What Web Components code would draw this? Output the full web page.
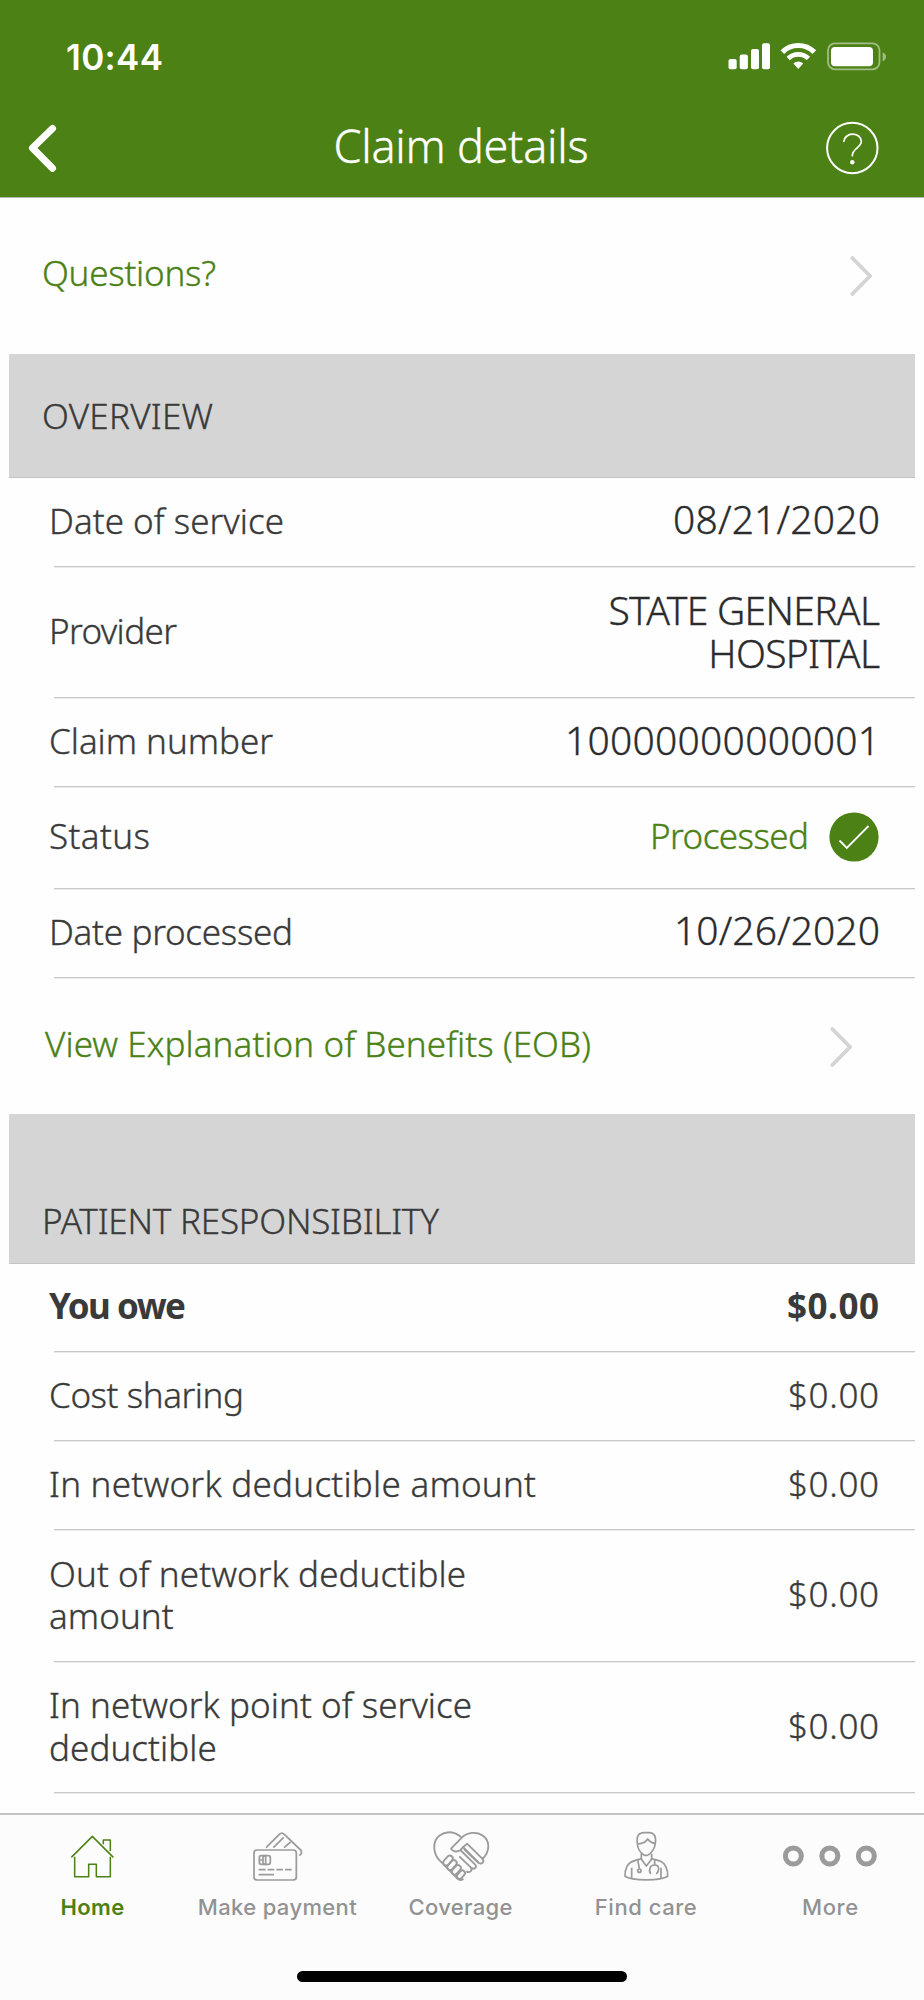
<!DOCTYPE html>
<html lang="en">
<head>
<meta charset="utf-8">
<title>Claim details</title>
<style>
  html, body {
    margin: 0;
    background: #fefefe;
  }

  body {
    width: 924px;
    height: 2000px;
    overflow: hidden;
    font-family: 'Noto Sans', 'Open Sans', sans-serif;
    font-weight: 300;
    font-size: 35px;
    color: #3a3a3a;
    -webkit-text-stroke: 0.35px;
  }
</style>
</head>
<body>
<claim-app>
  <status-bar slot="header"><fitted-text width="97">10:44</fitted-text></status-bar>
  <title-bar slot="header"><fitted-text width="255">Claim details</fitted-text></title-bar>

  <link-row style="--h:156px; --left:42px; --right:52px; --lift:6px"><fitted-text width="174">Questions?</fitted-text></link-row>

  <section-heading style="--h:124px"><fitted-text width="171">OVERVIEW</fitted-text></section-heading>
  <claim-row style="--h:89px">
    <fitted-text slot="label" width="235">Date of service</fitted-text>
    <fitted-text class="big date" width="207">08/21/2020</fitted-text>
  </claim-row>
  <claim-row style="--h:131px">
    <fitted-text slot="label" width="128">Provider</fitted-text>
    <fitted-text class="big" width="452" wrap style="width:290px">STATE GENERAL HOSPITAL</fitted-text>
  </claim-row>
  <claim-row style="--h:89px">
    <fitted-text slot="label" width="224">Claim number</fitted-text>
    <fitted-text class="big number" width="315">10000000000001</fitted-text>
  </claim-row>
  <claim-row style="--h:102px">
    <fitted-text slot="label" width="101">Status</fitted-text>
    <status-badge><fitted-text width="159">Processed</fitted-text></status-badge>
  </claim-row>
  <claim-row style="--h:89px">
    <fitted-text slot="label" width="244">Date processed</fitted-text>
    <fitted-text class="big date" width="206">10/26/2020</fitted-text>
  </claim-row>

  <link-row style="--h:136px; --left:45px; --right:72px; --lift:4px; --nudge:2px"><fitted-text width="546">View Explanation of Benefits (EOB)</fitted-text></link-row>

  <section-heading style="--h:150px; --drop:65px"><fitted-text width="397">PATIENT RESPONSIBILITY</fitted-text></section-heading>
  <claim-row class="strong" style="--h:88px">
    <fitted-text slot="label" width="137">You owe</fitted-text>
    <fitted-text width="92">$0.00</fitted-text>
  </claim-row>
  <claim-row style="--h:89px">
    <fitted-text slot="label" width="195">Cost sharing</fitted-text>
    <fitted-text width="91">$0.00</fitted-text>
  </claim-row>
  <claim-row style="--h:89px">
    <fitted-text slot="label" width="487">In network deductible amount</fitted-text>
    <fitted-text width="91">$0.00</fitted-text>
  </claim-row>
  <claim-row style="--h:132px">
    <fitted-text slot="label" width="551" wrap style="width:470px">Out of network deductible amount</fitted-text>
    <fitted-text width="91">$0.00</fitted-text>
  </claim-row>
  <claim-row style="--h:131px">
    <fitted-text slot="label" width="600" wrap style="width:470px">In network point of service deductible</fitted-text>
    <fitted-text width="91">$0.00</fitted-text>
  </claim-row>

  <tab-bar slot="footer">
    <tab-item icon="home" active><fitted-text width="64">Home</fitted-text></tab-item>
    <tab-item icon="payment"><fitted-text width="159">Make payment</fitted-text></tab-item>
    <tab-item icon="coverage"><fitted-text width="104">Coverage</fitted-text></tab-item>
    <tab-item icon="care"><fitted-text width="102">Find care</fitted-text></tab-item>
    <tab-item icon="more"><fitted-text width="56">More</fitted-text></tab-item>
  </tab-bar>
</claim-app>

<script>
  class BaseElement extends HTMLElement {
    constructor() {
      super();
      this.attachShadow({ mode: 'open' });
    }

    connectedCallback() {
      this.shadowRoot.innerHTML = `<style>${this.styles()}</style>${this.markup()}`;
    }

    styles() { return ''; }
    markup() { return '<slot></slot>'; }
  }

  /* Page shell: header, scrolling content, footer */
  class ClaimApp extends BaseElement {
    styles() {
      return `
        :host { display: flex; flex-direction: column; height: 2000px; }
        header { background: #4b8115; height: 197px; border-bottom: 1px solid #b3b8ae; flex: none; color: #fff; }
        main { flex: 1; min-height: 0; }
      `;
    }

    markup() {
      return `
        <header><slot name="header"></slot></header>
        <main><slot></slot></main>
        <slot name="footer"></slot>
      `;
    }
  }

  class StatusBar extends BaseElement {
    styles() {
      return `
        :host {
          display: flex; justify-content: space-between; align-items: center;
          box-sizing: border-box; height: 113px; padding: 0 37px 0 66px;
          font: 600 35px/42px Inter, sans-serif; -webkit-text-stroke: 0;
        }
        svg { display: block; }
      `;
    }

    markup() {
      return `
        <slot></slot>
        <svg width="160" height="32" viewBox="0 0 160 32" fill="#fff">
          <rect x="1.5" y="18" width="8.2" height="10.3" rx="2"/>
          <rect x="12.7" y="13.5" width="8.2" height="14.8" rx="2"/>
          <rect x="24" y="8" width="8" height="20.3" rx="2"/>
          <rect x="35" y="2.3" width="8" height="26" rx="2"/>
          <g fill="none" stroke="#fff" stroke-width="5.2">
            <path d="M55.3 11.2a22.5 22.5 0 0 1 32 0"/>
            <path d="M61.2 17.5a14.4 14.4 0 0 1 20.2 0" stroke-width="4.8"/>
          </g>
          <path d="M66.4 22.4a7.2 7.2 0 0 1 9.8 0l-4.9 5.6z"/>
          <rect x="101" y="2.3" width="51.5" height="26" rx="7" fill="none" stroke="#a2bd86" stroke-width="1.8"/>
          <rect x="104" y="6" width="42" height="19.3" rx="4"/>
          <path d="M155.7 11.2c4.4 2 4.4 7.2 0 9.2z" fill="#a2bd86"/>
        </svg>
      `;
    }
  }

  class TitleBar extends BaseElement {
    styles() {
      return `
        :host {
          display: grid; grid-template-columns: 64px 1fr 64px; align-items: center;
          height: 70px; padding: 0 40px 0 24px; font-size: 45px; line-height: 64px;
        }
        .title { text-align: center; padding: 0 0 4px 14px; }
        svg { display: block; }
        svg:last-child { justify-self: end; }
      `;
    }

    markup() {
      return `
        <svg width="40" height="56" viewBox="0 0 40 56" fill="none" stroke="#fff" stroke-width="7" stroke-linecap="round" stroke-linejoin="round">
          <path d="M28.5 8.5L8.5 28l20 20.2"/>
        </svg>
        <div class="title"><slot></slot></div>
        <svg width="64" height="56" viewBox="0 0 64 56" fill="none" stroke="#fff" stroke-width="2" stroke-linecap="round">
          <circle cx="32.3" cy="28" r="25.2"/>
          <path d="M23.9 21.4a8.5 7.5 0 0 1 8.7-7.2c5 0 8.7 3.1 8.7 7.3 0 6-9 6.8-9 14.2" stroke-width="1.7"/>
          <circle cx="32.3" cy="42.3" r="2.2" fill="#fff" stroke="none"/>
        </svg>
      `;
    }
  }

  class LinkRow extends BaseElement {
    styles() {
      return `
        :host {
          display: flex; justify-content: space-between; align-items: center;
          box-sizing: border-box; height: var(--h);
          padding: 0 var(--right) 0 var(--left); color: #4b8115; line-height: 38px;
        }
        div { padding-bottom: var(--lift); }
        svg { display: block; margin-top: var(--nudge, 0px); }
      `;
    }

    markup() {
      return `
        <div><slot></slot></div>
        <svg width="22" height="42" viewBox="0 0 22 42" fill="none" stroke="#d4d4d4" stroke-width="3.8" stroke-linecap="round">
          <path d="M2.3 3L20 21 2.3 39"/>
        </svg>
      `;
    }
  }

  class SectionHeading extends BaseElement {
    styles() {
      return `
        :host {
          display: flex; align-items: center; box-sizing: border-box;
          height: var(--h); margin: 0 9px; padding: var(--drop, 0px) 33px 0;
          background: #d5d5d5; border-bottom: 1px solid #c4c4c4; line-height: 38px;
        }
      `;
    }
  }

  class ClaimRow extends BaseElement {
    styles() {
      return `
        :host {
          display: flex; flex-direction: column; box-sizing: border-box;
          height: var(--h); padding: 0 9px 0 48px; line-height: 42px;
        }
        :host(.strong) { font-weight: 700; -webkit-text-stroke: 0; }
        .row { flex: 1; display: flex; justify-content: space-between; align-items: center; padding-right: 36px; }
        .label, .value { display: flex; flex-direction: column; padding-bottom: 3px; }
        .label { padding-left: 1px; }
        .value { align-items: flex-end; text-align: right; }
        .line { height: 1px; margin-left: 6px; background: #c8c8c8; box-shadow: 0 1px #ebebeb; }
        ::slotted(.big) { font-size: 39px; color: #2b2b2d; margin-right: -1px; }
        ::slotted(.date) { padding-bottom: 4px; }
        ::slotted(.number) { padding-bottom: 2px; }
        ::slotted([wrap]) { padding-top: 2px; }
      `;
    }

    markup() {
      return `
        <div class="row">
          <div class="label"><slot name="label"></slot></div>
          <div class="value"><slot></slot></div>
        </div>
        <div class="line"></div>
      `;
    }
  }

  class StatusBadge extends BaseElement {
    styles() {
      return `
        :host { display: flex; align-items: center; gap: 20px; color: #4b8115; }
        svg { display: block; margin: -3px 0 -4px 0; }
      `;
    }

    markup() {
      return `
        <slot></slot>
        <svg width="50" height="50" viewBox="0 0 50 50">
          <circle cx="25" cy="25" r="24.6" fill="#4b8115"/>
          <path d="M10.5 28.5l7.3 7.4L39.5 14" fill="none" stroke="#fff" stroke-width="1.8"/>
        </svg>
      `;
    }
  }

  class TabBar extends BaseElement {
    styles() {
      return `
        :host {
          display: flex; flex-direction: column; align-items: center; flex: none;
          box-sizing: border-box; height: 187px; background: #fcfcfc; border-top: 2px solid #c4c4c4;
        }
        nav { display: grid; grid-template-columns: repeat(5, 1fr); width: 100%; height: 156px; }
        .indicator { width: 330px; height: 11px; border-radius: 6px; background: #000; }
      `;
    }

    markup() {
      return `
        <nav><slot></slot></nav>
        <div class="indicator"></div>
      `;
    }
  }

  const ICONS = {
    home: {
      box: '13 84 288 168',
      art: `<g stroke-width="4.6">
        <path d="M95 172l63-63 63 63"/>
        <path d="M105 170v60h42v-37h23v37h42v-60"/>
        <path d="M191 133v-13h21v33"/>
      </g>`
    },
    payment: {
      box: '568 84 288 168',
      art: `<g stroke-width="5.2">
        <rect x="643" y="150" width="127" height="90" rx="9"/>
        <path d="M679 143l40-40c5-5 10-5 15 0l49 47c5 5 3 12-4 17"/>
        <path d="M701 143l31-31M733 143l20-17"/>
        <rect x="659" y="167" width="33" height="26" rx="6"/>
        <path d="M659 180h11M670 171c0-4 5-4 8-4v26c-3 0-8 0-8-4zM678 167v26"/>
        <path d="M657 209h21m6 0h20m6 0h20m6 0h20M657 224h46"/>
      </g>`
    },
    coverage: {
      box: '102 84 288 168',
      art: `<g stroke-width="5.6">
        <path d="M186 188C157 165 155 123 180 106c21-14 44-10 63 5"/>
        <path d="M306 178c25-22 24-55 4-70-19-15-48-11-64 4l-33 34c5 10 19 11 28 4l20-19 46 45c8 9-1 18-11 13l-44-42"/>
        <path d="M241 150l44 43c8 8-3 18-12 10l-35-34"/>
        <path d="M247 139l48 48M273 203c5 9-4 17-14 11"/>
        <rect x="187" y="173" width="34" height="17" rx="8.5" transform="rotate(-48 204 181.5)"/>
        <rect x="199" y="187" width="34" height="17" rx="8.5" transform="rotate(-48 216 195.5)"/>
        <rect x="213" y="201" width="32" height="17" rx="8.5" transform="rotate(-48 229 209.5)"/>
        <rect x="229" y="216" width="28" height="16" rx="8" transform="rotate(-48 243 224)"/>
        <path d="M186 188l46 48c6 6 13 6 18 0"/>
      </g>`
    },
    care: {
      box: '656 84 288 168',
      art: `<g stroke-width="5.2">
        <path d="M771 129c-3-22 5-31 21-31h14c15 0 22 10 19 31-1 16-12 31-22 36-5 2-8 2-12 0-10-6-20-20-20-36z"/>
        <path d="M773 132c11-1 23-5 29-15 5 7 12 12 22 14"/>
        <path d="M783 161v15c-15 5-34 5-43 23-4 8-7 20-6 30 20 14 108 14 128 0 1-10-2-22-6-30-9-18-26-18-42-23v-15"/>
        <path d="M781 175l17 23 18-23M754 203v33M842 203v33"/>
        <path d="M772 178l5 28M823 178v17"/>
        <circle cx="777" cy="212" r="5"/>
        <path d="M812 221c-7-4-6-26 11-26s13 20 5 27"/>
      </g>`
    },
    more: {
      box: '252 84 288 168',
      art: `<g stroke-width="15">
        <circle cx="280" cy="168" r="24"/>
        <circle cx="389.5" cy="168" r="24"/>
        <circle cx="499" cy="168" r="24"/>
      </g>`
    }
  };

  class TabItem extends BaseElement {
    styles() {
      return `
        :host {
          display: flex; flex-direction: column; align-items: center;
          padding-top: 13px; color: #929292; stroke: #9b9b9b;
          font: 500 22px/28px Inter, sans-serif; -webkit-text-stroke: 0;
        }
        :host([active]) { color: #4b8115; stroke: #4b8115; font-weight: 600; }
        :host([icon="coverage"]) div, :host([icon="more"]) div { padding-right: 3px; }
        :host([icon="care"]) div { padding-right: 2px; }
        svg { display: block; width: 96px; height: 56px; fill: none; margin-bottom: 9px; stroke-linejoin: round; overflow: visible; }
        slot { stroke: none; }
      `;
    }

    markup() {
      const icon = ICONS[this.getAttribute('icon')];
      return `<svg viewBox="${icon.box}">${icon.art}</svg><div><slot></slot></div>`;
    }
  }

  /*
   * Tracks its text out or in so that, set on one line, it fills the given width.
   * With the wrap attribute the text then breaks inside the host's own width.
   */
  class FittedText extends BaseElement {
    styles() {
      return `
        :host { display: inline-block; white-space: nowrap; font-variant-ligatures: none; }
        span { display: inline-block; }
        :host([wrap]) { line-height: 42.5px; }
        span.wrapped { display: block; white-space: normal; }
      `;
    }

    markup() { return '<span><slot></slot></span>'; }

    connectedCallback() {
      super.connectedCallback();
      requestAnimationFrame(() => this.fit());
    }

    fit() {
      const span = this.shadowRoot.querySelector('span');
      const gaps = this.textContent.length - 1;
      const spacing = (Number(this.getAttribute('width')) - span.getBoundingClientRect().width) / gaps;
      span.style.letterSpacing = `${spacing}px`;
      span.style.marginRight = `${-spacing}px`;
      span.classList.toggle('wrapped', this.hasAttribute('wrap'));
    }
  }

  customElements.define('claim-app', ClaimApp);
  customElements.define('status-bar', StatusBar);
  customElements.define('title-bar', TitleBar);
  customElements.define('link-row', LinkRow);
  customElements.define('section-heading', SectionHeading);
  customElements.define('claim-row', ClaimRow);
  customElements.define('status-badge', StatusBadge);
  customElements.define('tab-bar', TabBar);
  customElements.define('tab-item', TabItem);
  customElements.define('fitted-text', FittedText);
</script>
</body>
</html>
